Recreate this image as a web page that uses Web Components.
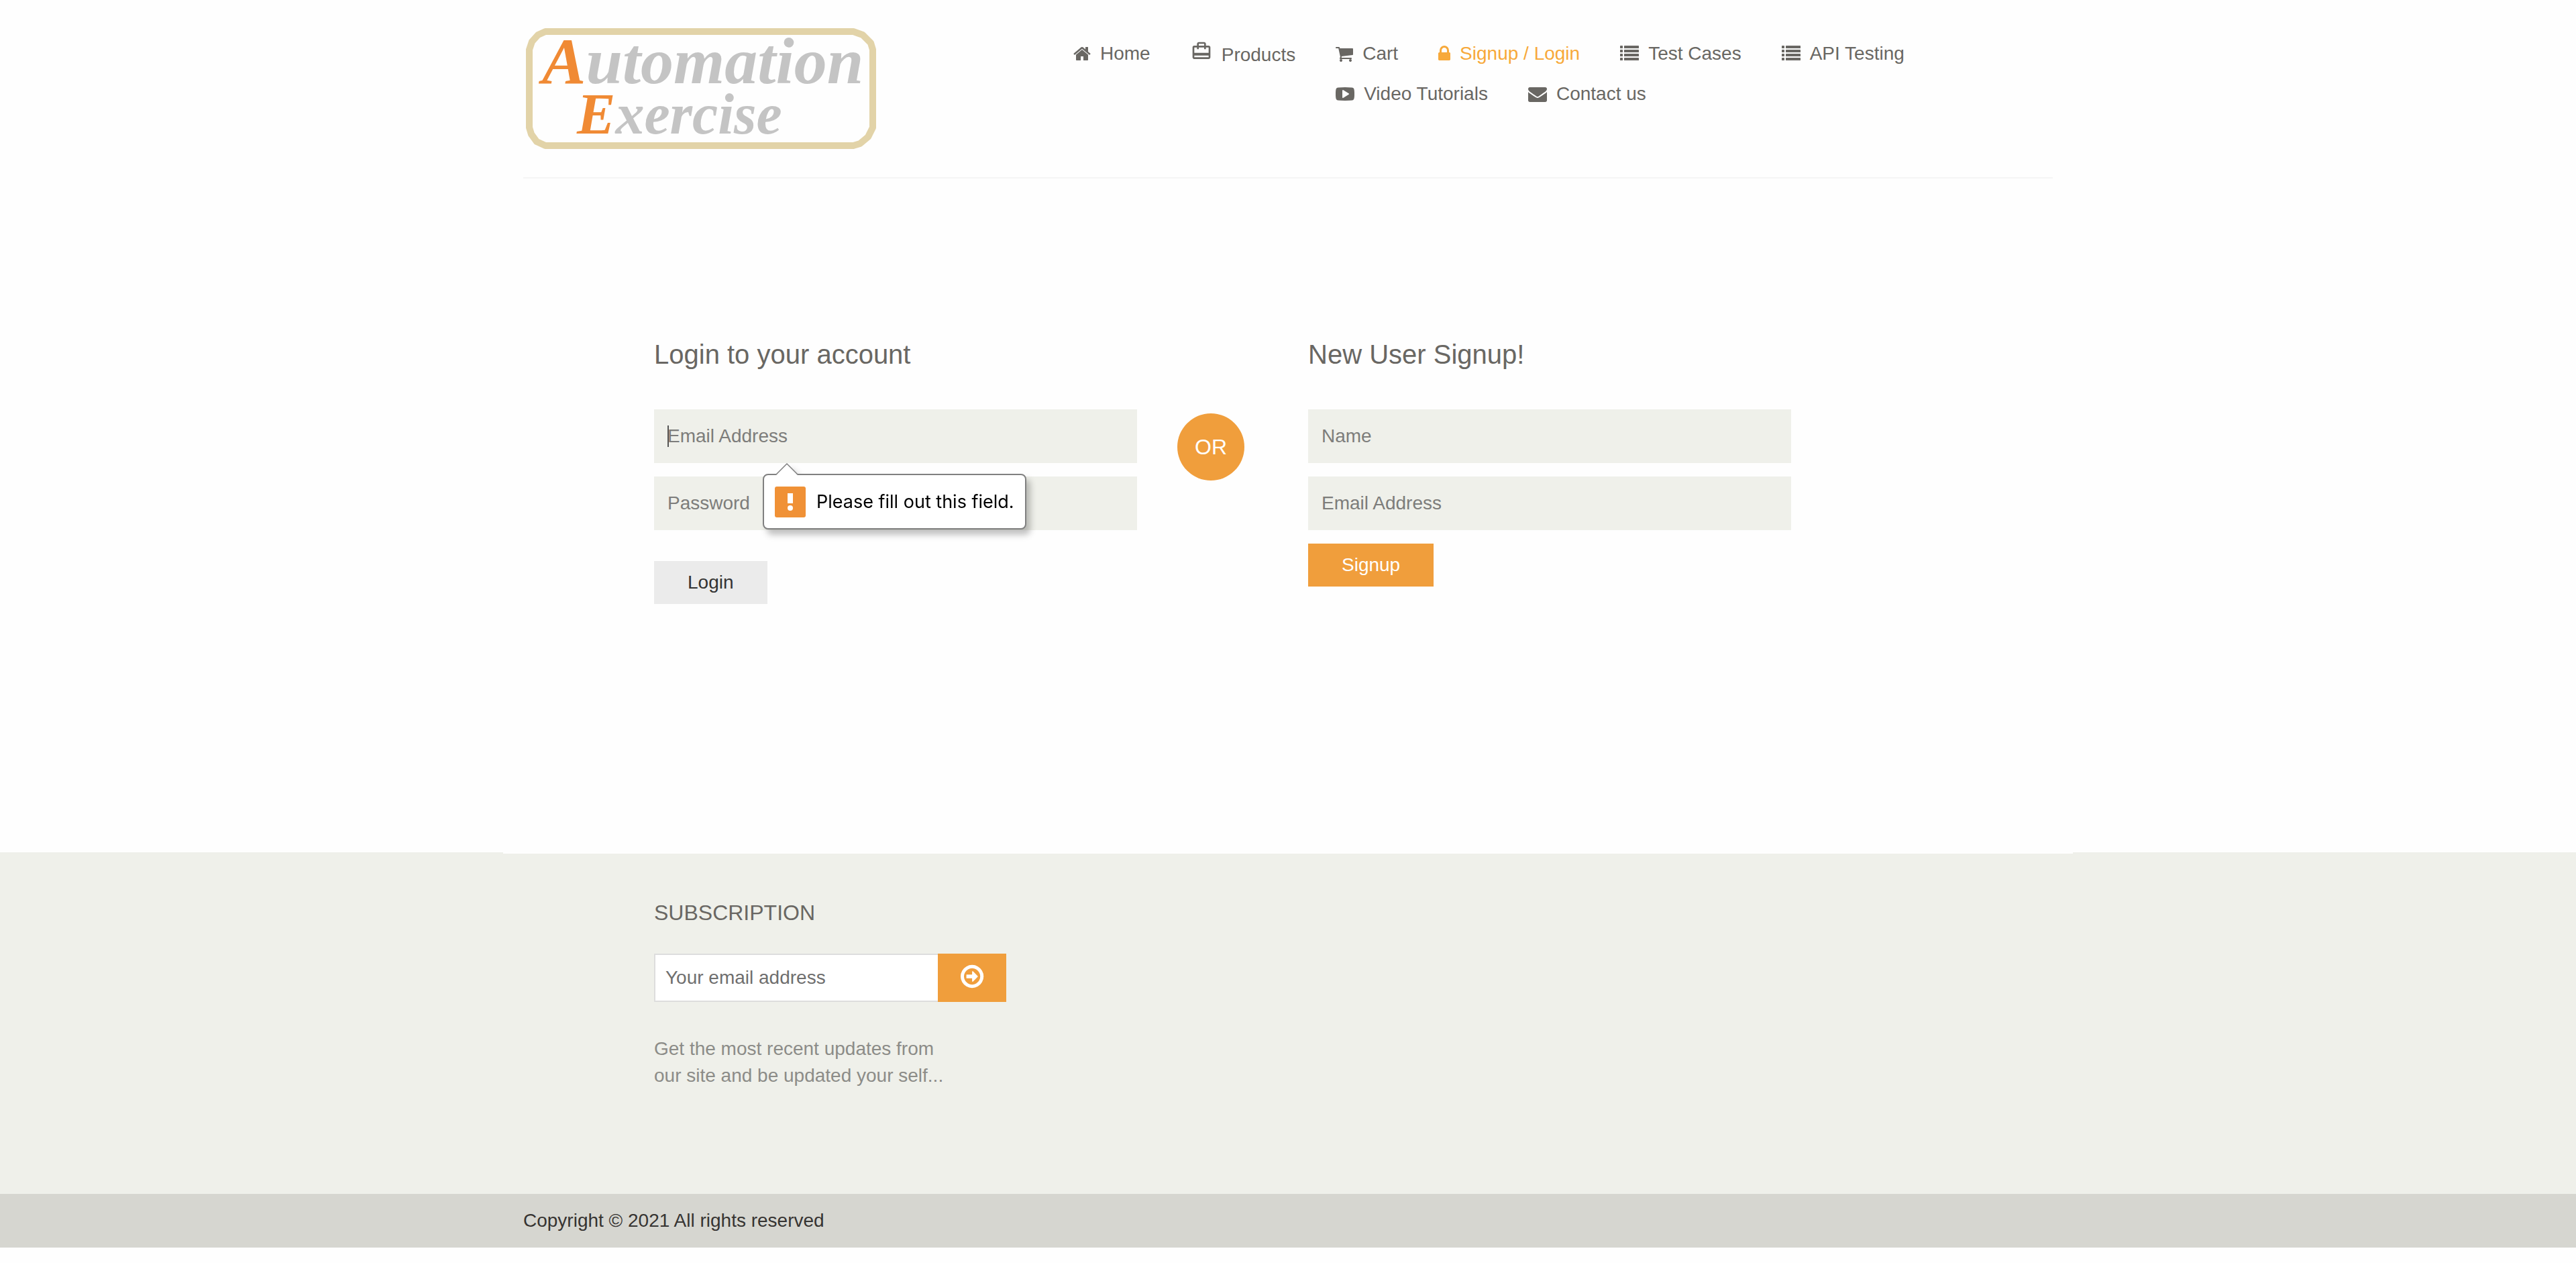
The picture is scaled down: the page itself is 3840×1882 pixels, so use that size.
<!DOCTYPE html>
<html lang="en">
<head>
<meta charset="utf-8">
<title>Automation Exercise - Signup / Login</title>
<style>
  body {
    margin: 0;
    background: #fefefe;
    color: #696763;
    font: 28px/40px "Liberation Sans", Arial, sans-serif;
    --accent: #f09e3c;
    --panel: #eff0ea;
    --muted: #7d7d7b;
  }
</style>
</head>
<body>
<site-header>
  <nav-item slot="lead" icon="home">Home</nav-item>
  <nav-item slot="lead" icon="bag">Products</nav-item>
  <nav-item icon="cart">Cart</nav-item>
  <nav-item icon="lock" active>Signup / Login</nav-item>
  <nav-item icon="list">Test Cases</nav-item>
  <nav-item icon="list">API Testing</nav-item>
  <nav-item icon="video">Video Tutorials</nav-item>
  <nav-item icon="mail">Contact us</nav-item>
</site-header>
<main>
  <account-section>
    <form-panel slot="login" heading="Login to your account">
      <text-field type="email" label="Email Address" caret>
        <validation-bubble>Please fill out this field.</validation-bubble>
      </text-field>
      <text-field type="password" label="Password"></text-field>
      <action-button slot="action" kind="plain">Login</action-button>
    </form-panel>
    <or-badge slot="divider">OR</or-badge>
    <form-panel slot="signup" heading="New User Signup!">
      <text-field type="text" label="Name"></text-field>
      <text-field type="email" label="Email Address"></text-field>
      <action-button slot="action">Signup</action-button>
    </form-panel>
  </account-section>
</main>
<site-footer>
  <subscribe-box heading="Subscription">Get the most recent updates from<br>our site and be updated your self...</subscribe-box>
  <span slot="legal">Copyright © 2021 All rights reserved</span>
</site-footer>

<script>
const icons = {
  home: ['64 0 1664 1792', 26, 28, '<path d="M1472 992v480q0 26-19 45t-45 19h-384v-384h-256v384h-384q-26 0-45-19t-19-45v-480q0-1 .5-3t.5-3l575-474 575 474q1 2 1 6zm223-69l-62 74q-8 9-21 11h-3q-13 0-21-7l-692-577-692 577q-12 8-24 7-13-2-21-11l-62-74q-8-10-7-23.5t11-21.5l719-599q32-26 76-26t76 26l244 204v-195q0-14 9-23t23-9h192q14 0 23 9t9 23v408l219 182q10 8 11 21.5t-7 23.5z"/>'],
  bag: ['0 0 24 24', 32, 32, '<path d="M20 6h-3V4c0-1.11-.89-2-2-2H9c-1.11 0-2 .89-2 2v2H4c-1.11 0-2 .89-2 2v11c0 1.11.89 2 2 2h16c1.11 0 2-.89 2-2V8c0-1.11-.89-2-2-2zM9 4h6v2H9V4zm11 15H4v-2h16v2zm0-5H4V8h3v2h2V8h6v2h2V8h3v6z"/>'],
  cart: ['64 0 1664 1792', 26, 28, '<path d="M704 1536q0 52-38 90t-90 38-90-38-38-90 38-90 90-38 90 38 38 90zm896 0q0 52-38 90t-90 38-90-38-38-90 38-90 90-38 90 38 38 90zm128-1088v512q0 24-16.5 42.5t-40.5 21.5l-1044 122q13 60 13 70 0 16-24 64h920q26 0 45 19t19 45-19 45-45 19h-1024q-26 0-45-19t-19-45q0-11 8-31.5t16-36 21.5-40 15.5-29.5l-177-823h-204q-26 0-45-19t-19-45 19-45 45-19h256q16 0 28.5 6.5t19.5 15.5 13 24.5 8 26 5.5 29.5 4.5 26h1201q26 0 45 19t19 45z"/>'],
  lock: ['320 0 1152 1792', 18, 28, '<path d="M640 768h512v-192q0-106-75-181t-181-75-181 75-75 181v192zm832 96v576q0 40-28 68t-68 28h-960q-40 0-68-28t-28-68v-576q0-40 28-68t68-28h32v-192q0-184 132-316t316-132 316 132 132 316v192h32q40 0 68 28t28 68z"/>'],
  list: ['0 0 1792 1792', 28, 28, [128, 512, 896, 1280].map(y => `<rect x="0" y="${y}" width="256" height="256" rx="32"/><rect x="384" y="${y}" width="1408" height="256" rx="32"/>`).join('')],
  video: ['0 0 1792 1792', 28, 28, '<path d="M1280 896q0-37-30-54l-512-320q-31-20-65-2-33 18-33 56v640q0 38 33 56 16 8 31 8 20 0 34-10l512-320q30-17 30-54zm512 0q0 96-1 150t-8.5 136.5-22.5 147.5q-16 73-69 123t-124 58q-222 25-671 25t-671-25q-71-8-124.5-58t-69.5-123q-14-65-21.5-147.5t-8.5-136.5-1-150 1-150 8.5-136.5 22.5-147.5q16-73 69-123t124-58q222-25 671-25t671 25q71 8 124.5 58t69.5 123q14 65 21.5 147.5t8.5 136.5 1 150z"/>'],
  mail: ['0 0 1792 1792', 28, 28, '<path d="M1792 710v794q0 66-47 113t-113 47h-1472q-66 0-113-47t-47-113v-794q44 49 101 87 362 246 497 345 57 42 92.5 65.5t94.5 48 110 24.5h2q51 0 110-24.5t94.5-48 92.5-65.5q170-123 498-345 57-39 100-87zm0-294q0 79-49 151t-122 123q-376 261-468 325-10 7-42.5 31t-54 38.5-52 32.5-57.5 27-50 9h-2q-23 0-50-9t-57.5-27-52-32.5-54-38.5-42.5-31q-91-64-262-182.5t-205-142.5q-62-42-117-115.5t-55-136.5q0-78 41.5-130t118.5-52h1472q65 0 112.5 47t47.5 113z"/>'],
  go: ['0 0 1792 1792', 40, 40, '<path d="M1285 896q0 14-9 23l-320 320q-9 9-23 9-13 0-22.5-9.5t-9.5-22.5v-192h-352q-13 0-22.5-9.5t-9.5-22.5v-192q0-13 9.5-22.5t22.5-9.5h352v-192q0-14 9-23t23-9q12 0 24 10l319 319q9 9 9 23zm160 0q0-148-73-273t-198-198-273-73-273 73-198 198-73 273 73 273 198 198 273 73 273-73 198-198 73-273zm224 0q0 209-103 385.5t-279.5 279.5-385.5 103-385.5-103-279.5-279.5-103-385.5 103-385.5 279.5-279.5 385.5-103 385.5 103 279.5 279.5 103 385.5z"/>']
};
const icon = name => {
  const [box, w, h, body] = icons[name];
  return `<svg viewBox="${box}" width="${w}" height="${h}" fill="currentColor" aria-hidden="true">${body}</svg>`;
};
/* Twelve equal columns, shared by every section of the page. */
const grid = `
  .row { display: grid; grid-template-columns: repeat(12, minmax(0, 1fr)); max-width: 2340px; margin: 0 auto; }
  .row > * { margin: 0 30px; min-width: 0; }`;

class Base extends HTMLElement {
  constructor() { super(); this.attachShadow({ mode: 'open' }); }
  connectedCallback() { this.shadowRoot.innerHTML = this.view(); }
  attr(name) { return this.getAttribute(name) || ''; }
}

customElements.define('site-logo', class extends Base {
  view() { return `
    <style>
      :host { display: block; }
      svg { display: block; overflow: visible; }
      text { font: italic bold 98px "Liberation Serif", serif; fill: #c4c4c4; }
      .small { font-size: 86px; }
      .cap { fill: #f08a34; }
    </style>
    <svg width="530" height="180" viewBox="0 0 530 180" role="img" aria-label="Automation Exercise">
      <path d="M33 5H492L506 10L518 22L521 32V148L514 162L502 172L492 175H33L20 169L12 158L9 148V32L13 20L22 10Z" fill="none" stroke="#e2d3a8" stroke-width="10" stroke-linejoin="round"/>
      <text x="28" y="82"><tspan class="cap">A</tspan>utomation</text>
      <text x="80" y="157" class="small"><tspan class="cap">E</tspan>xercise</text>
    </svg>`; }
});

customElements.define('nav-item', class extends Base {
  view() { return `
    <style>
      :host { display: block; }
      a { display: flex; align-items: center; gap: 14px; color: inherit; text-decoration: none; white-space: nowrap; }
      :host([active]) a { color: #f7a93a; }
      :host([icon="bag"]) a { align-items: flex-start; line-height: 44px; }
    </style>
    <a href="#">${icon(this.attr('icon'))}<span><slot></slot></span></a>`; }
});

customElements.define('site-header', class extends Base {
  view() { return `
    <style>${grid}
      :host { display: block; }
      .bar { border-bottom: 2px solid #f5f5f5; grid-column: 1 / -1; display: grid; grid-template-columns: 1fr 2fr; gap: 60px; padding: 42px 0; }
      nav { display: flex; gap: 60px; padding: 18px 0 0 20px; align-items: flex-start; }
      .rest { display: flex; flex-wrap: wrap; gap: 20px 60px; flex: 1; }
    </style>
    <header class="row"><div class="bar">
      <site-logo></site-logo>
      <nav><slot name="lead"></slot><div class="rest"><slot></slot></div></nav>
    </div></header>`; }
});

customElements.define('account-section', class extends Base {
  view() { return `
    <style>${grid}
      :host { display: block; }
      section { padding: 240px 0 370px; }
      .login { grid-column: 2 / span 4; --action-gap: 46px; }
      .divider { grid-column: span 1; padding-top: 110px; }
      .signup { grid-column: span 4; --action-gap: 20px; }
    </style>
    <section><div class="row">
      <div class="login"><slot name="login"></slot></div>
      <div class="divider"><slot name="divider"></slot></div>
      <div class="signup"><slot name="signup"></slot></div>
    </div></section>`; }
});

customElements.define('form-panel', class extends Base {
  view() { return `
    <style>
      :host { display: block; }
      h2 { margin: 0 0 60px; font-size: 40px; line-height: 44px; font-weight: 400; }
      .fields { display: flex; flex-direction: column; gap: 20px; margin-bottom: var(--action-gap); }
    </style>
    <h2>${this.attr('heading')}</h2>
    <form novalidate><div class="fields"><slot></slot></div><slot name="action"></slot></form>`; }
});

customElements.define('text-field', class extends Base {
  view() { return `
    <style>
      :host { display: block; position: relative; }
      input { display: block; box-sizing: border-box; width: 100%; height: 80px; padding: 0 20px; border: 0; border-radius: 0; outline: 0; background: var(--panel); color: #696763; font: inherit; }
      input::placeholder { color: var(--muted); opacity: 1; }
      i { position: absolute; left: 20px; top: 24px; width: 2px; height: 32px; background: #555; }
      ::slotted(validation-bubble) { position: absolute; z-index: 1; left: 162px; top: 96px; }
    </style>
    <input type="${this.attr('type')}" placeholder="${this.attr('label')}" aria-label="${this.attr('label')}">
    ${this.hasAttribute('caret') ? '<i></i>' : ''}<slot></slot>`; }
});

customElements.define('validation-bubble', class extends Base {
  view() { return `
    <style>
      :host { display: block; filter: drop-shadow(6px 8px 5px rgba(0,0,0,.24)); }
      .box { box-sizing: border-box; height: 83px; display: flex; align-items: center; gap: 16px; padding: 0 16px; background: #fff; border: 2px solid #808080; border-radius: 8px; color: #000; font: 27px/40px Inter, sans-serif; white-space: nowrap; }
      .tip { position: absolute; left: 19px; top: -17px; }
      svg { display: block; flex: none; }
    </style>
    <div class="box" role="alert">
      <svg width="46" height="46" viewBox="0 0 46 46" aria-hidden="true"><rect width="46" height="46" rx="3" fill="#f09136"/><rect x="19" y="10" width="8" height="15" fill="#fff"/><circle cx="23" cy="32" r="4" fill="#fff"/></svg>
      <slot></slot>
    </div>
    <svg class="tip" width="34" height="20" viewBox="0 0 34 20" aria-hidden="true"><path d="M1 19L17 2L33 19V20H1Z" fill="#fff"/><path d="M1 18L17 2L33 18" fill="none" stroke="#808080" stroke-width="1.5"/></svg>`; }
});

customElements.define('action-button', class extends Base {
  view() { return `
    <style>
      :host { display: block; }
      button { display: block; height: 64px; padding: 0 50px; border: 0; border-radius: 0; background: var(--accent); color: #fff; font: inherit; }
      :host([kind="plain"]) button { background: #ebebeb; color: #333; }
    </style>
    <button type="button"><slot></slot></button>`; }
});

customElements.define('or-badge', class extends Base {
  view() { return `
    <style>
      :host { display: flex; align-items: center; justify-content: center; width: 100px; height: 100px; border-radius: 50%; background: var(--accent); color: #fff; font-size: 32px; }
    </style>
    <slot></slot>`; }
});

customElements.define('subscribe-box', class extends Base {
  view() { return `
    <style>
      :host { display: block; }
      h2 { margin: 0 0 43px; font-size: 32px; line-height: 36px; font-weight: 400; text-transform: uppercase; }
      form { display: flex; height: 72px; margin-bottom: 50px; }
      input { flex: 1; min-width: 0; box-sizing: border-box; padding: 0 15px; border: 2px solid #ddd; border-right: 0; border-radius: 0; outline: 0; background: #fff; font: inherit; }
      input::placeholder { color: #6f6f6f; opacity: 1; }
      button { width: 102px; padding: 0 0 4px; border: 0; background: var(--accent); color: #fff; display: flex; align-items: center; justify-content: center; }
      p { margin: 0; color: #8c8c88; }
    </style>
    <h2>${this.attr('heading')}</h2>
    <form><input type="email" placeholder="Your email address" aria-label="Your email address"><button type="button" aria-label="Subscribe">${icon('go')}</button></form>
    <p><slot></slot></p>`; }
});

customElements.define('site-footer', class extends Base {
  view() { return `
    <style>${grid}
      :host { display: block; }
      .main { background: var(--panel); padding-bottom: 156px; }
      .edge { max-width: 2340px; height: 2px; margin: 0 auto 70px; background: #fefefe; }
      .subscribe { grid-column: 2 / span 3; }
      .legal { background: #d6d6d0; color: #363432; padding: 20px 0; }
      .legal p { grid-column: 1 / -1; }
    </style>
    <footer>
      <div class="main"><div class="edge"></div><div class="row"><div class="subscribe"><slot></slot></div></div></div>
      <div class="legal"><div class="row"><p><slot name="legal"></slot></p></div></div>
    </footer>`; }
});
</script>
</body>
</html>
